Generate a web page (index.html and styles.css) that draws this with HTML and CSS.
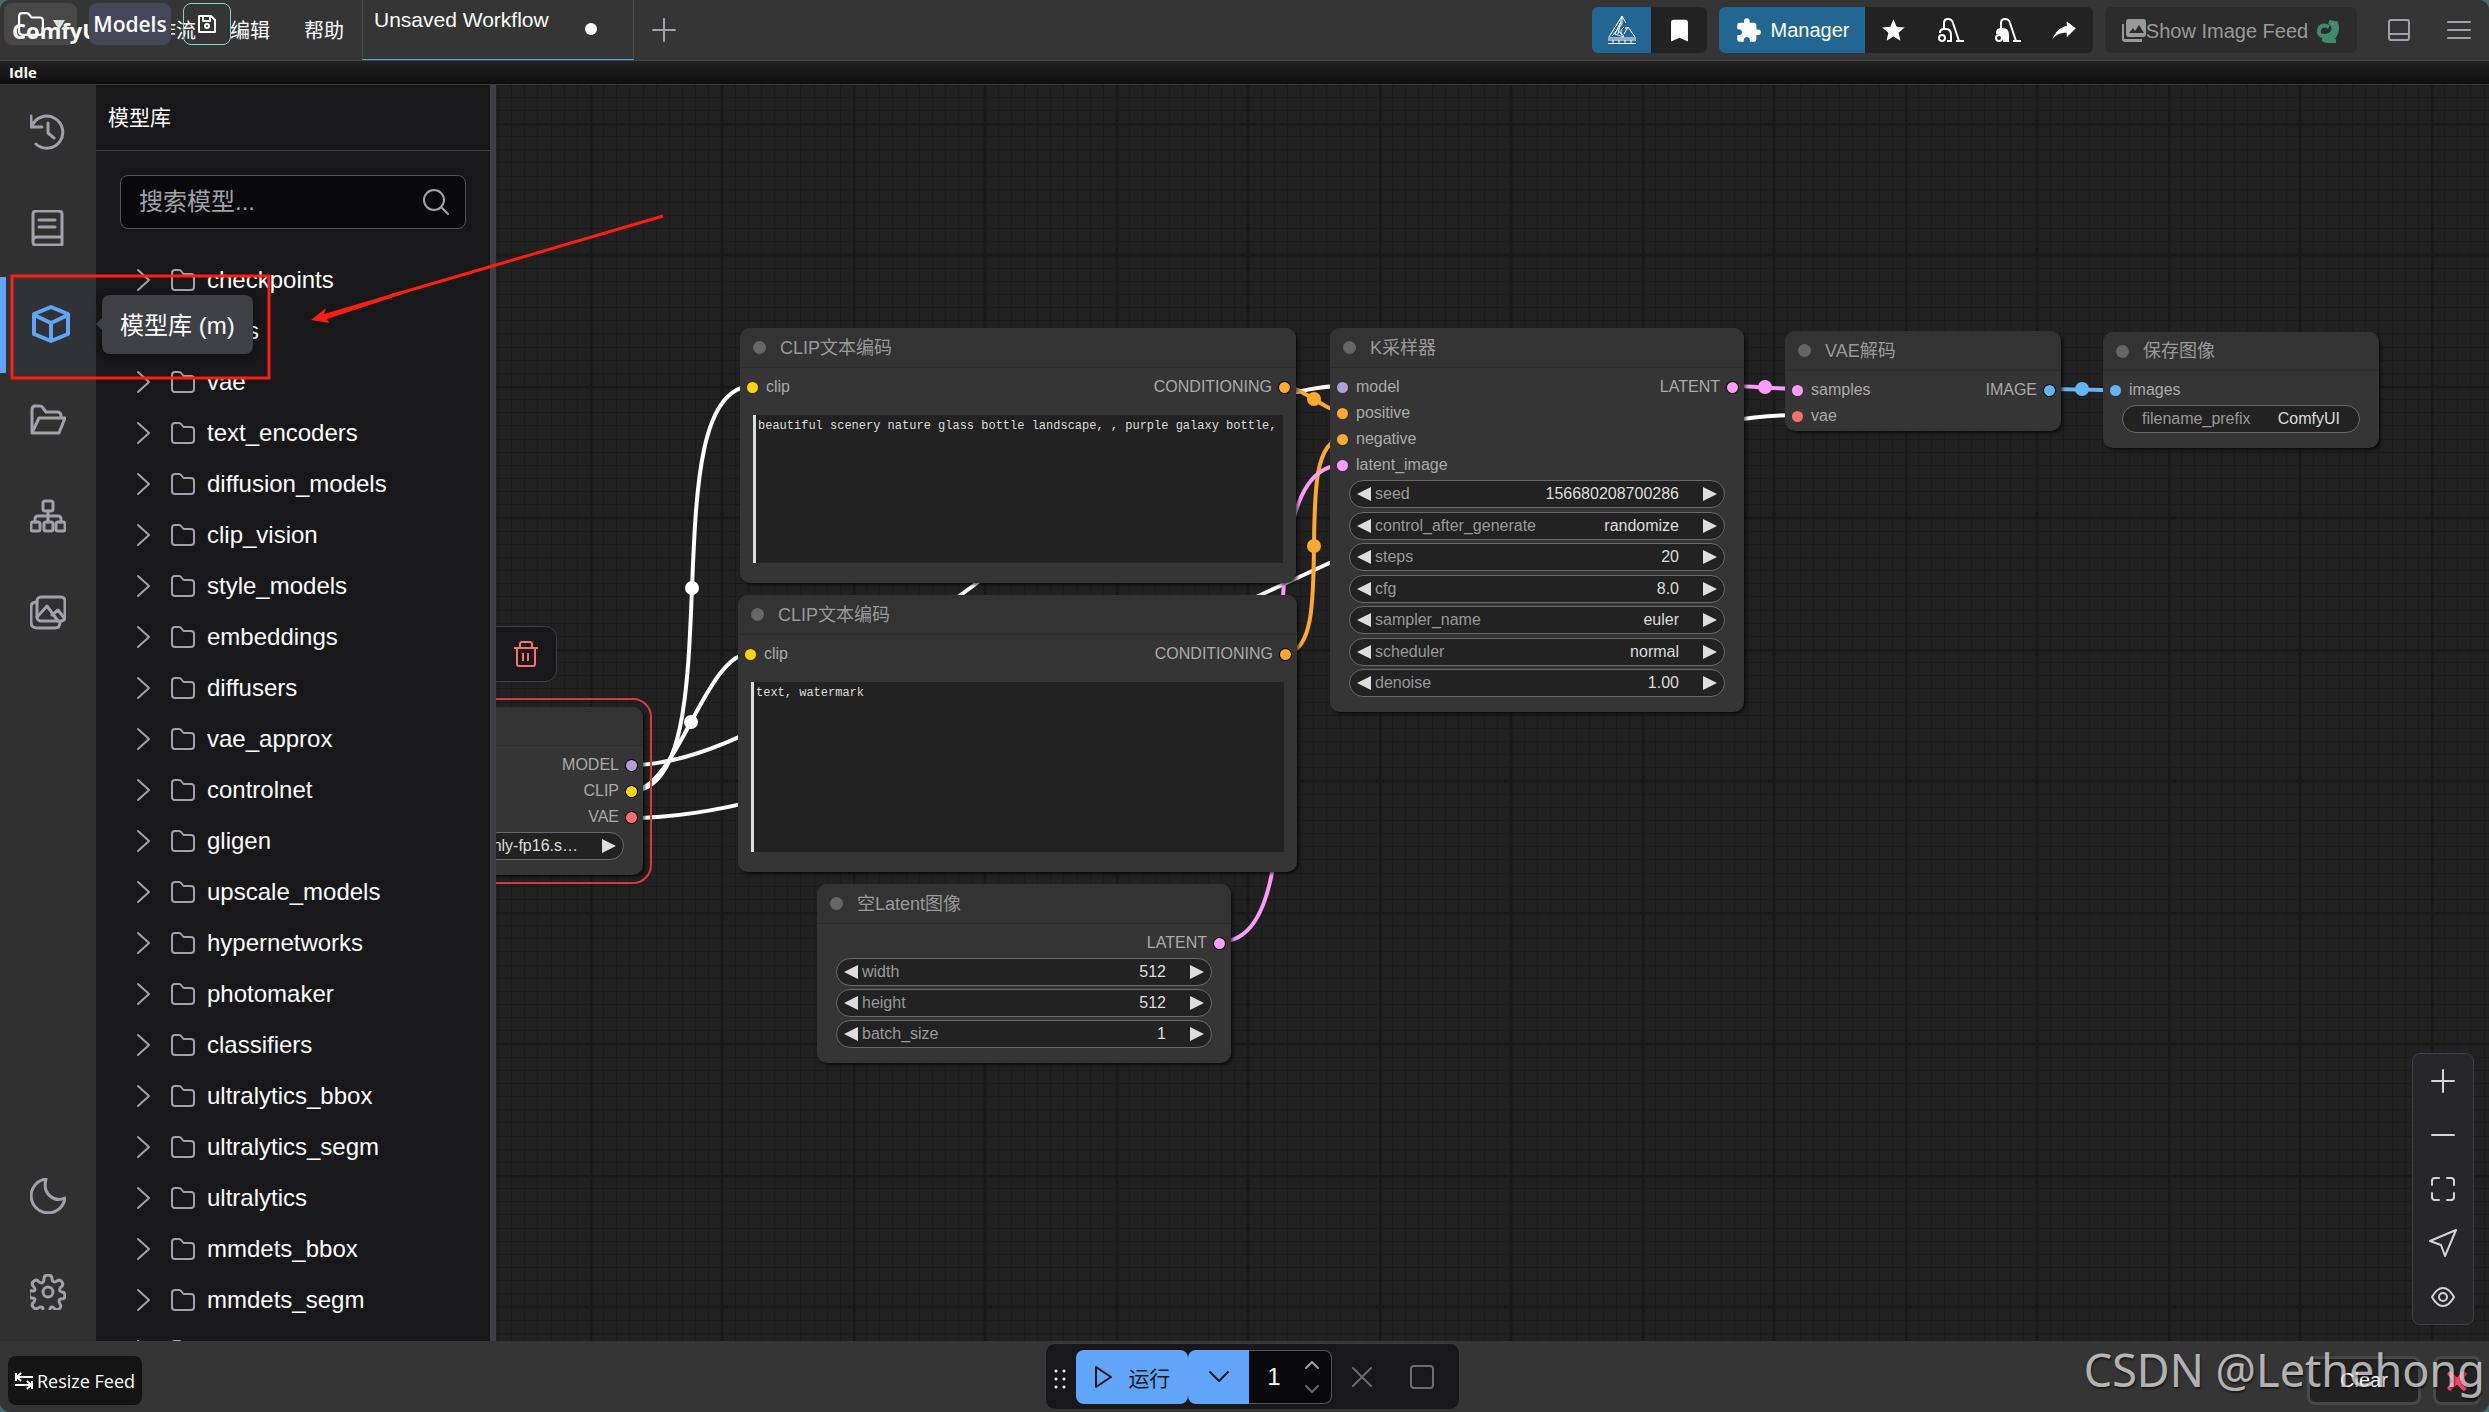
FILE: index.html
```html
<!DOCTYPE html>
<html lang="zh-CN">
<head>
  <meta charset="UTF-8">
  <title>ComfyUI</title>
  <link rel="stylesheet" href="styles.css">
</head>
<body>
  <svg class="defs" aria-hidden="true">
    <symbol id="chevron" viewBox="0 0 24 24"><path d="M6 2l11 10L6 22" /></symbol>
    <symbol id="folder" viewBox="0 0 24 24"><path d="M1 19V5q0-3 3-3h4q1.500 0 2.500 1.500L12.500 6H20q3 0 3 3v10q0 3-3 3H4q-3 0-3-3z" /></symbol>
    <symbol id="left" viewBox="0 0 14 14"><path d="M14 0v14L0 7z" /></symbol>
    <symbol id="right" viewBox="0 0 14 14"><path d="M0 0v14l14-7z" /></symbol>
  </svg>

  <div class="app">
    <header class="topbar">
      <div class="logo">ComfyUI</div>
      <nav class="menu">
        <a href="#">工作流</a>
        <a href="#">编辑</a>
        <a href="#">帮助</a>
      </nav>
      <button class="tab">Unsaved Workflow<span class="unsaved"></span></button>
      <button class="icon-btn" aria-label="New"><svg class="line gray" width="24" height="24" viewBox="0 0 24 24"><path d="M12 1v22M1 12h22" /></svg></button>

      <div class="actions">
        <div class="group">
          <button class="blue w59" aria-label="Crystools">
            <svg width="30" height="30" viewBox="0 0 30 30" fill="none" stroke="#fff" stroke-width="1"><path d="M1 23h28M1 25h28M1 28.500h28M6 25v3M12 25v3M18 25v3M24 25v3" /><path d="M15 1L2 22M15 1l-4 18M15 1l4 7M15 1v8L5 21M13 8L8 19l9 3M10 14l5 6M17 12c-4 3-4 7 0 9M17 19l4-7 7 10M18 13l3 0" /></svg>
          </button>
          <button class="w56" aria-label="Bookmarks"><svg width="29" height="29" viewBox="0 0 24 24" fill="#fff"><path d="M17,3H7A2,2 0 0,0 5,5V21L12,18L19,21V5C19,3.890 18.100,3 17,3Z" /></svg></button>
        </div>
        <div class="group">
          <button class="blue manager">
            <svg width="27" height="27" viewBox="0 0 24 24" fill="#fff"><path d="M20.500,11H19V7C19,5.890 18.100,5 17,5H13V3.500A2.500,2.500 0 0,0 10.500,1A2.500,2.500 0 0,0 8,3.500V5H4A2,2 0 0,0 2,7V10.800H3.500C5,10.800 6.200,12 6.200,13.500C6.200,15 5,16.200 3.500,16.200H2V20A2,2 0 0,0 4,22H7.800V20.500C7.800,19 9,17.800 10.500,17.800C12,17.800 13.200,19 13.200,20.500V22H17A2,2 0 0,0 19,20V16H20.500A2.500,2.500 0 0,0 23,13.500A2.500,2.500 0 0,0 20.500,11Z" /></svg>
            Manager
          </button>
          <button class="w57" aria-label="Favorites"><svg width="27" height="27" viewBox="0 0 24 24" fill="#fff"><path d="M12,17.270L18.180,21L16.540,13.970L22,9.240L14.810,8.620L12,2L9.190,8.620L2,9.240L7.450,13.970L5.820,21L12,17.270Z" /></svg></button>
          <button class="w57" aria-label="Unload models"><svg width="26" height="26" viewBox="0 0 26 26" fill="none" stroke="#fff" stroke-width="2"><circle cx="4" cy="21" r="3" /><path d="M2 16q0-4 4-4h2q5 0 5 6v6H9M6 12V6q0-4 4-4t5 4l6 18M18 24h8" /></svg></button>
          <button class="w57" aria-label="Free cache"><svg width="26" height="26" viewBox="0 0 26 26" fill="none" stroke="#fff" stroke-width="2"><path fill="#fff" d="M2 16q0-4 4-4h2q5 0 5 6v6h-4q0-8-7-8z" /><circle cx="4" cy="21" r="3" /><path d="M6 12V6q0-4 4-4t5 4l6 18M18 24h8" /></svg></button>
          <button class="w57" aria-label="Share"><svg width="27" height="27" viewBox="0 0 24 24" fill="#fff"><path d="M22 10l-8-6v4C8 9 4 13 1 20c4-5 8-6 13-6v4z" /></svg></button>
        </div>
        <button class="feed-toggle">
          <svg width="24" height="26" viewBox="0 0 24 26" fill="#999"><path fill-rule="evenodd" d="M7 1h14q3 0 3 3v12q0 3-3 3H7q-3 0-3-3V4q0-3 3-3zm0 14h15l-5-8-4 6-2-3z" /><path d="M0 6h2v15h18v3H3q-3 0-3-3z" /></svg>
          <span>Show Image Feed</span>
          <svg class="dragon" width="24" height="24" viewBox="0 0 24 24" fill="none" stroke="#3d8a6c" stroke-width="4"><path d="M13 8Q5 4 3 11q-1 6 5 6 7 0 9-5 2-6-4-9l7 1q2 5 0 10-2 6-8 5-5 0-4 2 3 2 12 1" /><circle cx="17" cy="5" r="1" stroke="none" fill="#d8604a" /></svg>
        </button>
        <button class="icon-btn" aria-label="Toggle bottom panel"><svg class="line gray" width="24" height="24" viewBox="0 0 24 24"><rect x="2" y="2" width="20" height="20" rx="2" /><path d="M2 16h20" /></svg></button>
        <button class="icon-btn" aria-label="Menu"><svg class="line gray" width="24" height="24" viewBox="0 0 24 24"><path d="M1 4h22M1 12h22M1 20h22" /></svg></button>
      </div>

      <!-- model browser buttons, float over the menu -->
      <div class="floating-tools">
        <button class="folder-btn" aria-label="Open folder">
          <svg class="line" width="28" height="26" viewBox="0 0 24 24"><use href="#folder" /></svg>
          <svg width="12" height="12" viewBox="0 0 12 12" fill="#ddd"><path d="M0 2h12L6 12z" /></svg>
        </button>
        <button class="models-btn">Models</button>
        <button class="save-btn" aria-label="Save"><svg class="line" width="20" height="20" viewBox="0 0 20 20"><path d="M2 2h12l4 4v12H2zM6 2v5h7V2" /><circle cx="10" cy="12" r="2" /></svg></button>
      </div>
    </header>

    <div class="status">Idle</div>

    <main class="main">
      <nav class="rail">
        <button aria-label="Queue"><svg class="line gray" width="36" height="36" viewBox="0 0 36 36"><path d="M1 2v11h11M2 12A16 16 0 1 1 6 30M18 9v10l6 5" /></svg></button>
        <button aria-label="Nodes"><svg class="line gray" width="36" height="36" viewBox="0 0 36 36"><path d="M5 1h24q3 0 3 3v31H6q-3 0-3-3V4q0-3 3-3zM3 31q0-4 4-4h25M9 10h16M9 17h16" /></svg></button>
        <button class="active" aria-label="模型库"><svg class="line" width="38" height="38" viewBox="0 0 38 38"><path d="M19 2l17 7v20l-17 7-17-7V9zM2 10l17 8 17-8M19 18v18" /></svg></button>
        <button aria-label="Workflows"><svg class="line gray" width="36" height="36" viewBox="0 0 36 36"><path d="M2 30V8q0-4 3-4h5q2 0 3 2l3 4h11q4 0 4 4v2M2 31l7-15h26l-6 15z" /></svg></button>
        <button aria-label="Node map"><svg class="line gray" width="36" height="36" viewBox="0 0 36 36"><rect x="13" y="3" width="10" height="10" rx="2" /><rect x="1" y="24" width="9" height="9" rx="2" /><rect x="14" y="24" width="9" height="9" rx="2" /><rect x="26" y="24" width="9" height="9" rx="2" /><path d="M18 13v11M5 24v-3q0-3 3-3h20q3 0 3 3v3" /></svg></button>
        <button aria-label="Images"><svg class="line gray" width="36" height="36" viewBox="0 0 36 36"><rect x="7" y="3" width="28" height="24" rx="4" /><path d="M7 8q-6 0-6 5v15q0 6 6 6h18q5 0 5-6M7 23l10-11 11 15M22 21l6-5 7 9" /></svg></button>
        <button class="push" aria-label="Theme"><svg class="line gray" width="36" height="36" viewBox="0 0 36 36"><path d="M16 1A17 17 0 1 0 35 20q-8 4-15-2T16 1z" /></svg></button>
        <button aria-label="Settings"><svg class="line gray" width="36" height="36" viewBox="0 0 36 36"><path d="M14 5q0-4 4-4t4 4q0 2 2 3 2 0 3-1 3-2 5 1t-1 5q-2 2-1 4 1 1 2 1 3 0 3 4 0 3-4 3-2 0-2 2 0 1 1 3 2 3-1 5t-5-1q-1-1-3-1-1 1-1 2 0 4-4 4t-3-4q0-2-2-2-1 0-3 1-3 2-5-1t1-5q1-2 1-3-1-1-3-1-3 0-3-4t4-3q2 0 2-2 0-1-2-3-2-3 1-5t5 1q1 1 3 1 2-1 2-4z" /><circle cx="18" cy="18" r="5" /></svg></button>
      </nav>

      <aside class="panel">
        <h2 class="panel-title">模型库</h2>
        <div class="search">
          <input type="text" placeholder="搜索模型..." aria-label="搜索模型">
          <svg class="line gray" width="26" height="26" viewBox="0 0 26 26"><circle cx="11" cy="11" r="10" /><path d="M18 18l7 7" /></svg>
        </div>
        <ul class="tree" id="tree"></ul>
      </aside>

      <section class="canvas">
        <svg class="wires" width="100%" height="100%">
          <defs>
            <!-- two grid cells of ten steps each -->
            <pattern id="grid" x="94" y="38" width="263" height="263" patternUnits="userSpaceOnUse">
              <path id="minor" stroke="#1b1b1b" stroke-width="1" d="" />
              <path stroke="#191919" stroke-width="3" d="M0 1h263M0 132h263M1 0v263M132 0v263" />
            </pattern>
          </defs>
          <rect width="100%" height="100%" fill="url(#grid)" />
          <g transform="translate(-496 -85)" fill="none" stroke-width="4">
            <g stroke="#fff">
              <path d="M631 765C832 765 1142 386 1343 386" />
              <path d="M631 818C939 818 1490 415 1798 415" />
              <path d="M631 791C737 791 647 386 753 386" />
              <path d="M631 791C677 791 705 653 751 653" />
            </g>
            <g stroke="#ffa931">
              <path d="M1284 386C1300 386 1327 412 1343 412" />
              <path d="M1285 653C1341 653 1287 439 1343 439" />
            </g>
            <g stroke="#ff9cf9">
              <path d="M1219 942C1342 942 1220 465 1343 465" />
              <path d="M1732 386C1748 386 1782 389 1798 389" />
            </g>
            <path stroke="#64b5f6" d="M2049 389C2066 389 2099 390 2116 390" />
            <g stroke="none">
              <circle cx="692" cy="588" r="7" fill="#fff" />
              <circle cx="691" cy="722" r="7" fill="#fff" />
              <circle cx="1314" cy="399" r="7" fill="#ffa931" />
              <circle cx="1314" cy="546" r="7" fill="#ffa931" />
              <circle cx="1765" cy="387" r="7" fill="#ff9cf9" />
              <circle cx="2082" cy="389" r="7" fill="#64b5f6" />
            </g>
          </g>
        </svg>

        <div class="node-toolbar">
          <button aria-label="Delete"><svg width="24" height="26" viewBox="0 0 24 26" fill="none" stroke="#f87171" stroke-width="2"><path d="M0 7h24M3 7v16q0 2 2 2h14q2 0 2-2V7M6 7V3q0-2 2-2h8q2 0 2 2v4M9 12v8M14 12v8" /></svg></button>
        </div>

        <article class="node checkpoint selected">
          <h3></h3>
          <div class="slots"><div class="out"><p>MODEL<i class="model"></i></p><p>CLIP<i class="clip"></i></p><p>VAE<i class="vae"></i></p></div></div>
          <div class="widgets">
            <div class="widget"><button aria-label="Previous"><svg><use href="#left" /></svg></button><select aria-label="ckpt_name"><option>v1-5-pruned-emaonly-fp16.s…</option></select><button aria-label="Next"><svg><use href="#right" /></svg></button></div>
          </div>
        </article>

        <article class="node prompt-a">
          <h3>CLIP文本编码</h3>
          <div class="slots"><div class="in"><p><i class="clip"></i>clip</p></div><div class="out"><p>CONDITIONING<i class="cond"></i></p></div></div>
          <textarea aria-label="Positive prompt" spellcheck="false">beautiful scenery nature glass bottle landscape, , purple galaxy bottle,</textarea>
        </article>

        <article class="node prompt-b">
          <h3>CLIP文本编码</h3>
          <div class="slots"><div class="in"><p><i class="clip"></i>clip</p></div><div class="out"><p>CONDITIONING<i class="cond"></i></p></div></div>
          <textarea aria-label="Negative prompt" spellcheck="false">text, watermark</textarea>
        </article>

        <article class="node latent">
          <h3>空Latent图像</h3>
          <div class="slots"><div class="out"><p>LATENT<i class="lat"></i></p></div></div>
          <div class="widgets">
            <div class="widget"><button aria-label="Decrease"><svg><use href="#left" /></svg></button><label for="width">width</label><input id="width" value="512"><button aria-label="Increase"><svg><use href="#right" /></svg></button></div>
            <div class="widget"><button aria-label="Decrease"><svg><use href="#left" /></svg></button><label for="height">height</label><input id="height" value="512"><button aria-label="Increase"><svg><use href="#right" /></svg></button></div>
            <div class="widget"><button aria-label="Decrease"><svg><use href="#left" /></svg></button><label for="batch">batch_size</label><input id="batch" value="1"><button aria-label="Increase"><svg><use href="#right" /></svg></button></div>
          </div>
        </article>

        <article class="node sampler">
          <h3>K采样器</h3>
          <div class="slots">
            <div class="in"><p><i class="model"></i>model</p><p><i class="cond"></i>positive</p><p><i class="cond"></i>negative</p><p><i class="lat"></i>latent_image</p></div>
            <div class="out"><p>LATENT<i class="lat"></i></p></div>
          </div>
          <div class="widgets">
            <div class="widget"><button aria-label="Decrease"><svg><use href="#left" /></svg></button><label for="seed">seed</label><input id="seed" value="156680208700286"><button aria-label="Increase"><svg><use href="#right" /></svg></button></div>
            <div class="widget"><button aria-label="Previous"><svg><use href="#left" /></svg></button><label for="control">control_after_generate</label><select id="control"><option>randomize</option></select><button aria-label="Next"><svg><use href="#right" /></svg></button></div>
            <div class="widget"><button aria-label="Decrease"><svg><use href="#left" /></svg></button><label for="steps">steps</label><input id="steps" value="20"><button aria-label="Increase"><svg><use href="#right" /></svg></button></div>
            <div class="widget"><button aria-label="Decrease"><svg><use href="#left" /></svg></button><label for="cfg">cfg</label><input id="cfg" value="8.0"><button aria-label="Increase"><svg><use href="#right" /></svg></button></div>
            <div class="widget"><button aria-label="Previous"><svg><use href="#left" /></svg></button><label for="sampler">sampler_name</label><select id="sampler"><option>euler</option></select><button aria-label="Next"><svg><use href="#right" /></svg></button></div>
            <div class="widget"><button aria-label="Previous"><svg><use href="#left" /></svg></button><label for="scheduler">scheduler</label><select id="scheduler"><option>normal</option></select><button aria-label="Next"><svg><use href="#right" /></svg></button></div>
            <div class="widget"><button aria-label="Decrease"><svg><use href="#left" /></svg></button><label for="denoise">denoise</label><input id="denoise" value="1.00"><button aria-label="Increase"><svg><use href="#right" /></svg></button></div>
          </div>
        </article>

        <article class="node decode">
          <h3>VAE解码</h3>
          <div class="slots"><div class="in"><p><i class="lat"></i>samples</p><p><i class="vae"></i>vae</p></div><div class="out"><p>IMAGE<i class="img"></i></p></div></div>
        </article>

        <article class="node save">
          <h3>保存图像</h3>
          <div class="slots"><div class="in"><p><i class="img"></i>images</p></div></div>
          <div class="widgets">
            <div class="widget plain"><label for="prefix">filename_prefix</label><input id="prefix" value="ComfyUI"></div>
          </div>
        </article>

        <div class="zoom-tools">
          <button aria-label="Zoom in"><svg class="line" width="24" height="24" viewBox="0 0 24 24"><path d="M12 1v22M1 12h22" /></svg></button>
          <button aria-label="Zoom out"><svg class="line" width="24" height="24" viewBox="0 0 24 24"><path d="M1 12h22" /></svg></button>
          <button aria-label="Fit view"><svg class="line" width="24" height="24" viewBox="0 0 24 24"><path d="M1 8V4q0-3 3-3h4M16 1h4q3 0 3 3v4M23 16v4q0 3-3 3h-4M8 23H4q-3 0-3-3v-4" /></svg></button>
          <button aria-label="Pan mode"><svg class="line" width="28" height="28" viewBox="0 0 28 28"><path d="M27 1L1 12l11 4 4 11z" /></svg></button>
          <button aria-label="Toggle links"><svg class="line" width="24" height="24" viewBox="0 0 24 24"><path d="M1 12q5-9 11-9t11 9q-5 9-11 9T1 12z" /><circle cx="12" cy="12" r="4" /></svg></button>
        </div>
      </section>

      <div class="tooltip">模型库 (m)</div>
      <svg class="marks" width="680" height="400">
        <g fill="none" stroke="#ff1f10">
          <rect x="12" y="191" width="257" height="102" stroke-width="3" />
          <path d="M663 131L390 211" stroke-width="3" />
        </g>
        <path fill="#ff1f10" d="M311 235l15-12-2 6 78-23 1 3-76 25 2 4z" />
      </svg>
    </main>

    <footer class="feed">
      <button class="resize"><svg width="18" height="18" viewBox="0 0 18 18" fill="none" stroke="#fff" stroke-width="2"><path d="M1 1v8M2 5h16M6 1L2 5l4 4M17 9v8M16 13H0M12 9l4 4-4 4" /></svg>Resize Feed</button>
      <button class="clear">Clear</button>
      <button class="close" aria-label="Close"><svg width="20" height="20" viewBox="0 0 20 20" fill="none" stroke="#ff3f6c" stroke-width="5" stroke-linecap="round"><path d="M3 3l14 14M17 3L3 17" /></svg></button>
    </footer>

    <div class="actionbar">
      <span class="grip"></span>
      <button class="run"><svg class="line" width="20" height="24" viewBox="0 0 20 24"><path d="M2 2l15 10L2 22z" /></svg>运行</button>
      <button class="run-more" aria-label="Run options"><svg class="line" width="24" height="24" viewBox="0 0 24 24"><path d="M3 7l9 9 9-9" /></svg></button>
      <div class="count">
        <input value="1" aria-label="Batch count">
        <div class="spin">
          <button aria-label="More"><svg class="line gray" width="16" height="10" viewBox="0 0 16 10"><path d="M2 8l6-6 6 6" /></svg></button>
          <button aria-label="Less"><svg class="line dim" width="16" height="10" viewBox="0 0 16 10"><path d="M2 2l6 6 6-6" /></svg></button>
        </div>
      </div>
      <button class="bar-btn" aria-label="Cancel"><svg class="line dim" width="20" height="20" viewBox="0 0 20 20"><path d="M1 1l18 18M19 1L1 19" /></svg></button>
      <button class="bar-btn" aria-label="Stop"><svg class="line dim" width="26" height="26" viewBox="0 0 26 26"><rect x="2" y="2" width="22" height="22" rx="3" /></svg></button>
    </div>

    <div class="watermark">CSDN @Lethehong</div>
  </div>

  <script>
    const folders = ['checkpoints', 'loras', 'vae', 'text_encoders', 'diffusion_models', 'clip_vision',
      'style_models', 'embeddings', 'diffusers', 'vae_approx', 'controlnet', 'gligen', 'upscale_models',
      'hypernetworks', 'photomaker', 'classifiers', 'ultralytics_bbox', 'ultralytics_segm', 'ultralytics',
      'mmdets_bbox', 'mmdets_segm', 'sams'];
    document.getElementById('tree').innerHTML = folders.map(name =>
      `<li><button><svg class="line gray chev"><use href="#chevron"/></svg><svg class="line gray"><use href="#folder"/></svg>${name}</button></li>`
    ).join('');

    let d = '';
    for (let i = 1; i < 20; i++) {
      const p = Math.round(i * 263 / 20) + 0.5;
      d += `M0 ${p}h263M${p} 0v263`;
    }
    document.getElementById('minor').setAttribute('d', d);
  </script>
</body>
</html>
```
FILE: styles.css
```css
* { box-sizing: border-box; }
html { background: #48696c; }
body {
  margin: 0;
  font-family: "Liberation Sans", "Noto Sans CJK SC", sans-serif;
  color: #fff;
}
button, input, select, textarea {
  font: inherit;
  color: inherit;
  background: none;
  border: 0;
  padding: 0;
  margin: 0;
  outline: 0;
}
button { display: flex; align-items: center; justify-content: center; }
svg { flex: none; }
h2, h3, p, ul { margin: 0; padding: 0; font-weight: normal; }
.defs { position: absolute; width: 0; height: 0; }
.line { fill: none; stroke: #fff; stroke-width: 2; stroke-linecap: round; stroke-linejoin: round; }
.gray { stroke: #a1a1aa; }
.dim { stroke: #6b6b70; }

.app {
  position: relative;
  display: grid;
  grid-template-rows: 61px 24px 1fr 71px;
  height: 100vh;
  overflow: hidden;
  border-radius: 10px;
  background: #353535;
}

/* top bar */
.topbar {
  position: relative;
  display: flex;
  background: #353535;
  border-bottom: 1px solid #444;
}
.logo {
  width: 119px;
  padding-left: 12px;
  font: bold 22px/60px "Open Sans", sans-serif;
}
.menu { display: flex; font-size: 20px; line-height: 62px; padding-right: 1px; }
.menu a { color: #fff; text-decoration: none; padding: 0 17px; }
.tab {
  width: 272px;
  align-items: flex-start;
  justify-content: flex-start;
  padding: 8px 11px;
  font-size: 21px;
  line-height: 24px;
  border: 1px solid #4c4c4c;
  border-width: 0 1px;
  border-bottom: 1px solid #5f9bdc;
}
.unsaved { width: 12px; height: 12px; margin: 15px 0 0 36px; border-radius: 50%; background: #fff; }
.icon-btn { width: 60px; height: 60px; }
.actions { display: flex; align-items: center; margin-left: auto; }
.group {
  display: flex;
  height: 46px;
  margin-right: 12px;
  border-radius: 6px;
  overflow: hidden;
  background: #222;
}
.group .blue { background: #236692; }
.w56 { width: 56px; }
.w57 { width: 57px; }
.w59 { width: 59px; }
.manager { width: 146px; gap: 9px; font-size: 20px; }
.feed-toggle {
  width: 252px;
  height: 46px;
  margin-right: 12px;
  padding-top: 2px;
  border-radius: 6px;
  background: #2c2c2c;
  color: #999;
  font-size: 20px;
  line-height: 24px;
}
.dragon { margin-left: 8px; }
.floating-tools { position: absolute; left: 4px; top: 3px; display: flex; gap: 12px; }
.floating-tools button { height: 42px; border-radius: 8px; }
.folder-btn { width: 73px; gap: 8px; background: #ffffff18; }
.models-btn { width: 82px; background: #45465a; font: 600 21px/24px "Open Sans", sans-serif; }
.save-btn { width: 48px; border: 1px solid #7fd6c5; }

.status {
  padding-left: 9px;
  font: bold 15px/23px "Open Sans", sans-serif;
  background: linear-gradient(#222, #0e0e0e);
  border-bottom: 1px solid #3a3a3a;
}

.main { position: relative; display: flex; min-height: 0; }

/* icon rail */
.rail { display: flex; flex-direction: column; width: 96px; background: #303030; }
.rail button { height: 96px; padding-bottom: 2px; }
.rail .line { stroke-width: 3; }
.rail .active { border-left: 6px solid #60a5fa; background: #2f3335; }
.rail .active .line { stroke: #60a5fa; stroke-width: 4; }
.rail .push { margin-top: auto; }

/* model panel */
.panel {
  display: flex;
  flex-direction: column;
  width: 400px;
  background: #18181b;
  border-right: 6px solid #3f3f46;
}
.panel-title { padding: 0 12px; font-size: 21px; line-height: 65px; border-bottom: 1px solid #3f3f46; }
.search {
  display: flex;
  align-items: center;
  height: 54px;
  margin: 24px 24px 25px;
  padding: 0 16px 0 18px;
  border: 1px solid #52525b;
  border-radius: 8px;
  background: #09090b;
}
.search input { flex: 1; min-width: 0; font-size: 24px; }
.search input::placeholder { color: #a1a1aa; }
.tree { flex: 1; overflow: hidden; list-style: none; }
.tree button { height: 51px; padding-left: 36px; font-size: 24px; line-height: 28px; }
.tree svg { width: 24px; height: 24px; margin-right: 12px; }
.tree .chev { margin-right: 15px; }

/* graph */
.canvas { position: relative; flex: 1; overflow: hidden; background: #212121; }
.wires { position: absolute; left: 0; top: 0; }
.node {
  position: absolute;
  display: flex;
  flex-direction: column;
  border-radius: 10px;
  background: #353535;
  box-shadow: 2px 2px 3px #0009;
  color: #aaa;
  font-size: 16px;
  line-height: 26px;
}
.node h3 {
  display: flex;
  align-items: center;
  height: 40px;
  padding-left: 13px;
  border-bottom: 1px solid #2c2c2c;
  border-radius: 10px 10px 0 0;
  background: #333;
  color: #999;
  font-size: 18px;
}
.node h3::before { content: ""; width: 13px; height: 13px; margin-right: 14px; border-radius: 50%; background: #666; }
.slots { display: flex; justify-content: space-between; padding: 6px 6px 0 7px; }
.slots p { display: flex; align-items: center; gap: 8px; }
.out { margin-left: auto; }
.out p { justify-content: flex-end; gap: 7px; }
.slots i { width: 11px; height: 11px; border-radius: 50%; }
.out i { box-shadow: 0 0 0 1px #000; }
.model { background: #b39ddb; }
.clip { background: #ffd500; }
.vae { background: #ff6e6e; }
.cond { background: #ffa931; }
.lat { background: #ff9cf9; }
.img { background: #64b5f6; }
.node textarea {
  flex: 1;
  margin: 15px 13px 20px;
  padding: 3px 2px;
  border-left: 3px solid #ddd;
  background: #222;
  color: #ddd;
  font: 12px/16px "Liberation Mono", monospace;
  resize: none;
}
.widgets { display: flex; flex: 1; flex-direction: column; justify-content: space-between; padding: 2px 19px 15px; }
.widget {
  display: flex;
  align-items: center;
  height: 28px;
  padding: 0 7px;
  border: 1px solid #6a6a6a;
  border-radius: 14px;
  background: #222;
  color: #999;
}
.widget svg { width: 14px; height: 14px; fill: #ddd; }
.widget label { margin-left: 4px; }
.widget input, .widget select {
  flex: 1;
  min-width: 0;
  height: 26px;
  margin-right: 24px;
  color: #ddd;
  text-align: right;
  text-align-last: right;
  appearance: none;
}
.widget.plain { padding: 0 19px; }
.widget.plain label { margin: 0; }
.widget.plain input { margin: 0; }
.selected { outline: 2px solid #dc3a40; outline-offset: 7px; }

.checkpoint { left: -267px; top: 622px; width: 414px; height: 168px; }
.prompt-a { left: 244px; top: 243px; width: 556px; height: 255px; }
.prompt-b { left: 242px; top: 510px; width: 559px; height: 277px; }
.latent { left: 321px; top: 799px; width: 414px; height: 179px; }
.sampler { left: 834px; top: 243px; width: 414px; height: 384px; }
.decode { left: 1289px; top: 246px; width: 276px; height: 100px; }
.save { left: 1607px; top: 247px; width: 276px; height: 116px; }

.node-toolbar {
  position: absolute;
  left: -120px;
  top: 541px;
  display: flex;
  justify-content: flex-end;
  width: 181px;
  height: 56px;
  padding-right: 18px;
  border: 1px solid #3f3f46;
  border-radius: 12px;
  background: #18181b;
}
.zoom-tools {
  position: absolute;
  right: 15px;
  bottom: 16px;
  width: 62px;
  border: 1px solid #3f3f46;
  border-radius: 8px;
  background: #27272a;
}
.zoom-tools button { width: 60px; height: 54px; }
.zoom-tools .line { stroke: #d4d4d8; }

.tooltip {
  position: absolute;
  left: 102px;
  top: 210px;
  padding: 16px 18px 13px;
  border-radius: 8px;
  background: #3f3f46;
  box-shadow: 0 3px 8px #0006;
  font-size: 24px;
  line-height: 30px;
}
.tooltip::before {
  content: "";
  position: absolute;
  left: -6px;
  top: 23px;
  border: 6px solid transparent;
  border-left: 0;
  border-right-color: #3f3f46;
}
.marks { position: absolute; left: 0; top: 0; pointer-events: none; }

/* image feed */
.feed { display: flex; gap: 12px; padding: 15px 8px 7px; background: #353535; }
.feed button { height: 49px; border-radius: 8px; background: #222; }
.feed .resize { gap: 4px; width: 134px; background: #141414; font: 18px/24px "Open Sans", sans-serif; }
.feed .clear { width: 114px; margin-left: auto; border: 3px solid #484848; font-size: 20px; }
.feed .close { width: 48px; border: 3px solid #484848; }

.actionbar {
  position: absolute;
  left: 42%;
  bottom: 2px;
  display: flex;
  align-items: center;
  height: 67px;
  padding: 0 7px 0 8px;
  border: 1px solid #3a3a3e;
  border-radius: 10px;
  background: #18181b;
}
.grip {
  width: 12px;
  height: 20px;
  margin: 4px 10px 0 0;
  background: radial-gradient(circle at 2px 2px, #ddd 1px, transparent 2px) 0 0 / 8px 8px;
}
.run, .run-more { height: 54px; border-radius: 8px; background: #60a5fa; color: #18181b; }
.run { width: 112px; gap: 14px; font-size: 21px; }
.run-more { width: 61px; border-radius: 8px 0 0 8px; }
.run .line, .run-more .line { stroke: #18181b; }
.count {
  display: flex;
  width: 83px;
  height: 54px;
  border: 1px solid #52525b;
  border-left: 0;
  border-radius: 0 8px 8px 0;
  background: #09090b;
}
.count input { width: 49px; font-size: 24px; text-align: center; }
.spin { display: flex; flex-direction: column; justify-content: center; gap: 14px; padding-left: 6px; }
.bar-btn { width: 60px; height: 54px; }

.watermark {
  position: absolute;
  right: 4px;
  bottom: 12px;
  color: #ffffffaa;
  font: 45px/60px "Noto Sans", sans-serif;
  text-shadow: 1px 2px 2px #0008;
}
```
